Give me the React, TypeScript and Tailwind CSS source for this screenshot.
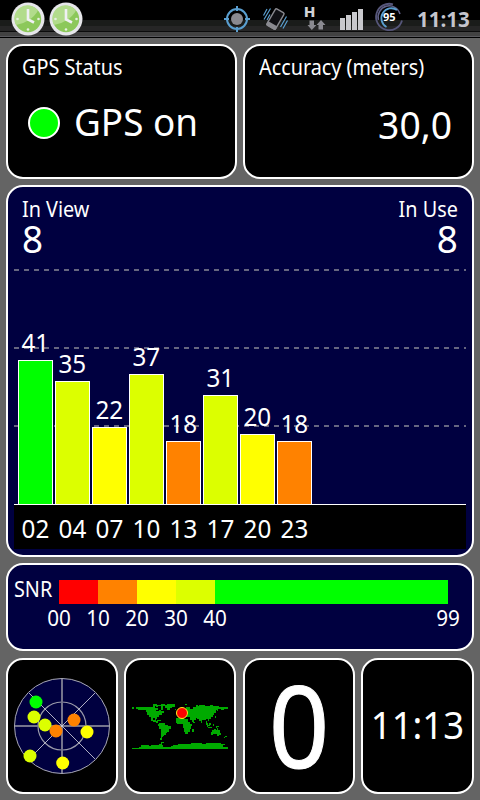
import React from 'react';

const satellites = [
    { id: '02', snr: 41, color: 'bg-[#00ff00]' },
    { id: '04', snr: 35, color: 'bg-[#dcff00]' },
    { id: '07', snr: 22, color: 'bg-[#ffff00]' },
    { id: '10', snr: 37, color: 'bg-[#dcff00]' },
    { id: '13', snr: 18, color: 'bg-[#ff8200]' },
    { id: '17', snr: 31, color: 'bg-[#dcff00]' },
    { id: '20', snr: 20, color: 'bg-[#ffff00]' },
    { id: '23', snr: 18, color: 'bg-[#ff8200]' },
];

const snrScale = [
    { label: '00', color: 'bg-[#ff0000]', width: 'w-[39px]' },
    { label: '10', color: 'bg-[#ff8200]', width: 'w-[39px]' },
    { label: '20', color: 'bg-[#ffff00]', width: 'w-[39px]' },
    { label: '30', color: 'bg-[#dcff00]', width: 'w-[39px]' },
    { label: '40', color: 'bg-[#00ff00]', width: 'w-[233px]' },
    { label: '99', color: '', width: 'w-0' },
];

const skyDots = [
    { x: 36, y: 702, fill: '#00ff00' },
    { x: 34, y: 717, fill: '#dcff00' },
    { x: 45, y: 725, fill: '#dcff00' },
    { x: 56, y: 731, fill: '#ff8200' },
    { x: 74, y: 720, fill: '#ff8200' },
    { x: 87, y: 732, fill: '#ffff00' },
    { x: 30, y: 756, fill: '#dcff00' },
    { x: 62.7, y: 763, fill: '#ffff00' },
];

const Panel: React.FC<{ className?: string; children: React.ReactNode }> = ({ className = '', children }) => (
    <div className={`rounded-[17px] border-2 border-white ${className}`}>{children}</div>
);

// slightly condensed caption used on every panel
const Title: React.FC<{ className?: string; children: React.ReactNode }> = ({ className = 'origin-left', children }) => (
    <div className={`scale-x-[0.9] whitespace-nowrap text-[22px] leading-[24px] ${className}`}>{children}</div>
);

const ClockIcon = () => (
    <svg width="34" height="34" viewBox="0 0 34 34">
        <circle cx="17" cy="17" r="16.5" fill="#e6e6ea" />
        <circle cx="17" cy="17" r="13.2" fill="#8cc85a" />
        <path d="M5 23A13.2 13.2 0 0 1 27 8.500Q24 14 18 18T5 23Z" fill="#b2dc8c" />
        <path d="M17 7V17.500L23 20.500" fill="none" stroke="#f0f0f4" strokeWidth="2.600" />
        <g fill="#e6f0e0">
            <circle cx="6.500" cy="17" r="1.300" />
            <circle cx="27.500" cy="17" r="1.300" />
            <circle cx="17" cy="27.500" r="1.300" />
        </g>
    </svg>
);

// everything on the right of the status bar up to the clock
const StatusIcons = () => (
    <svg width="190" height="38" viewBox="220 0 190 38">
        <g fill="none" stroke="#5a9fd0" strokeWidth="2">
            <circle cx="237" cy="19" r="10" />
            <path d="M237 6V11M237 27V32M224 19H229M245 19H250" />
        </g>
        <circle cx="237" cy="19" r="6" fill="#8a8a90" />

        <g transform="rotate(30 275.500 19)">
            <rect x="270.500" y="9.500" width="10" height="19" rx="1.500" fill="#101014" stroke="#8a8a90" strokeWidth="1.400" />
            <rect x="270" y="24.500" width="11" height="4.500" rx="1" fill="#8a8a90" />
        </g>
        <path d="M263.500 15.500L267 9M264 19.500L270.500 8.500M267 20L270 14.500M280.500 27L286.500 16.500M283 28.500L287.500 20.500" fill="none" stroke="#5a9fd0" strokeWidth="1.200" />

        <text x="303.800" y="17" fontFamily="DejaVu Sans" fontWeight="bold" fontSize="14" fill="#d2d2d6">H</text>
        <path d="M309.500 20.500H314V25H316.500L311.800 30L307.500 25H309.500Z" fill="#8a8a90" />
        <path d="M321 20L325.500 25H323V29.500H318.500V25H316.500Z" fill="#8a8a90" />

        <g fill="#c8c8cc">
            <rect x="340" y="18" width="5" height="12" />
            <rect x="346" y="15" width="5" height="15" />
            <rect x="352" y="12" width="5" height="18" />
            <rect x="358" y="9" width="5" height="21" />
        </g>

        <path d="M393 4.300A13.200 13.200 0 1 0 402 20.500" fill="none" stroke="#56567a" strokeWidth="1.800" />
        <path d="M400 14A11 11 0 0 0 378.500 20" fill="none" stroke="#62628a" strokeWidth="1.500" />
        <path d="M397 10A10 10 0 1 0 386.500 27" fill="none" stroke="#5a9fd0" strokeWidth="1.800" />
        <text x="389.300" y="21" textAnchor="middle" fontFamily="Open Sans" fontWeight="bold" fontSize="11" fill="#ffffff">95</text>
    </svg>
);

const SkyView = () => (
    <svg width="108" height="132" viewBox="8 660 108 132">
        <circle cx="62" cy="726" r="47.500" fill="#000040" stroke="#a8a8b4" strokeWidth="1" />
        <circle cx="62" cy="726" r="24" fill="none" stroke="#9a9aaa" strokeWidth="1.200" />
        <path d="M62 679V773M15 726H109" stroke="#74748c" strokeWidth="2" />
        <path d="M29 693L95 759M95 693L29 759" stroke="#dcdce6" strokeWidth="0.800" />
        {skyDots.map(dot => (
            <circle key={`${dot.x}-${dot.y}`} cx={dot.x} cy={dot.y} r="6.500" fill={dot.fill} />
        ))}
    </svg>
);

const WorldMap = () => (
    <svg width="96" height="48" viewBox="36 144 288 144">
        <g fill="#00aa00" shapeRendering="crispEdges">
            <path d="M36 156H42V162H36ZM48 156H99V153H105V159H114V165H108V168H117V165H123V168H132V174H126V180H117V186H111V192H105V189H93V186H87V180H81V171H78V165H54V162H48Z" />
            <path d="M99 147H111V150H123V147H135V153H129V159H123V153H114V156H108V153H99ZM123 159H129V165H123ZM132 150H141V147H165V156H156V159H150V165H141V159H135V153H132Z" />
            <path d="M93 189H99V195H105V192H108V198H114V204H108V201H99V198H93ZM111 195H123V198H111Z" />
            <path d="M117 204H135V210H144V213H153V222H147V231H141V234H138V240H132V243H129V246H126V255H120V249H123V222H117V213H114V207H117Z" />
            <path d="M168 189H192V192H204V201H210V207H216V213H213V222H210V231H204V237H195V231H192V219H189V207H171V204H168Z" />
            <path d="M216 222H222V231H216Z" />
            <path d="M198 156H210V162H219V156H228V153H237V150H255V153H270V150H279V153H297V156H324V162H312V165H303V162H294V168H291V165H288V174H282V180H279V186H273V192H267V198H264V192H258V195H246V204H243V198H237V192H231V189H228V195H222V201H216V195H210V186H198V180H204V174H198Z" />
            <path d="M195 147H201V150H195ZM228 150H234V153H228ZM165 162H168V165H165ZM219 201H225V204H219ZM285 183H288V189H285ZM258 198H261V204H264V210H270V213H264V216H261V210H258ZM267 204H273V210H267ZM279 207H282V213H279ZM288 213H297V216H291V219H288ZM264 216H276V219H264Z" />
            <path d="M276 225H282V222H288V225H291V219H294V225H300V234H303V240H297V243H291V237H279V240H273V231H276ZM312 246H315V249H312ZM315 243H321V246H315Z" />
            <path d="M36 279H57V276H63V270H87V273H93V270H117V267H123V261H132V264H126V270H129V276H153V273H159V270H174V267H213V264H246V267H258V264H303V267H315V270H309V276H324V282H36Z" />
        </g>
        <circle cx="186" cy="174" r="16.500" fill="#ff0000" stroke="#ffee20" strokeWidth="3" />
    </svg>
);

const SatelliteChart = () => (
    <div className="relative mx-[6px] h-[296px]">
        {/* grid lines */}
        <div className="absolute inset-x-0 top-[16px] flex flex-col gap-[76px]">
            {[0, 1, 2].map(i => (
                <div key={i} className="h-[2px] bg-[repeating-linear-gradient(90deg,#666680_0_5px,transparent_5px_10px)]" />
            ))}
        </div>
        <div className="relative flex h-[252px] items-end gap-[2px] border-b border-white pl-[4px]">
            {satellites.map(sat => (
                <div key={sat.id} className="flex w-[35px] flex-col items-center">
                    <span className="mb-[3px] h-[30px] scale-x-[0.97] text-[25px] leading-[30px]">{sat.snr}</span>
                    <div
                        className={`w-full border border-b-0 border-white ${sat.color}`}
                        style={{ height: Math.floor(sat.snr * 3.52) }}
                    />
                </div>
            ))}
        </div>
        <div className="flex h-[44px] gap-[2px] bg-black pl-[4px] pt-[8px]">
            {satellites.map(sat => (
                <span key={sat.id} className="w-[35px] scale-x-[0.97] text-center text-[25px] leading-[30px]">{sat.id}</span>
            ))}
        </div>
    </div>
);

const App: React.FC = () => {
    return (
        <div className="flex h-[800px] w-[480px] flex-col overflow-hidden bg-[#646464] font-['Noto_Sans','Open_Sans',sans-serif] text-white">
            {/* Status bar */}
            <div className="flex h-[38px] shrink-0 items-start bg-[linear-gradient(180deg,#000_0_20px,#1a1c1a_20px_26px,#262626_26px_31px,#0c0c0c_31px_32px,#424242_32px_36px,#58585c_36px_37px,#000_37px)] pl-[10.500px] pt-0">
                <div className="flex gap-[4px] pt-[1.500px]">
                    <ClockIcon />
                    <ClockIcon />
                </div>
                <div className="ml-auto flex">
                    <StatusIcons />
                    <span className="w-[70px] pl-[7px] pt-[7px] font-['Open_Sans'] text-[20.500px] font-bold leading-[24px] text-[#c4c4cc]">11:13</span>
                </div>
            </div>

            <div className="flex flex-col px-[6px] pt-[6px]">
                <div className="flex gap-[6px]">
                    <Panel className="h-[135px] w-[231px] bg-black pl-[14px] pt-[8px]">
                        <Title>GPS Status</Title>
                        <div className="mt-[23px] flex items-start pl-[6px]">
                            <div className="mt-[6px] size-[32px] rounded-full border-2 border-white bg-[#00ff00]" />
                            <span className="ml-[14px] origin-left scale-x-[0.97] text-[38px] leading-[40px]">GPS on</span>
                        </div>
                    </Panel>
                    <Panel className="h-[135px] w-[231px] bg-black pl-[14px] pr-[20px] pt-[8px]">
                        <Title>Accuracy (meters)</Title>
                        <div className="mt-[26px] origin-right scale-x-[0.98] text-right text-[38px] leading-[40px]">30,0</div>
                    </Panel>
                </div>

                <Panel className="mt-[6px] h-[372px] bg-[#000040]">
                    <div className="flex h-[66px] justify-between pl-[14px] pr-[14px] pt-[9px]">
                        <div>
                            <Title>In View</Title>
                            <div className="mt-[1px] origin-left scale-x-[0.97] text-[38px] leading-[34px]">8</div>
                        </div>
                        <div className="text-right">
                            <Title className="origin-right">In Use</Title>
                            <div className="mt-[1px] origin-right scale-x-[0.97] text-[38px] leading-[34px]">8</div>
                        </div>
                    </div>
                    <SatelliteChart />
                </Panel>

                <Panel className="mt-[6px] h-[88px] bg-[#000040] pl-[6px] pt-[11px]">
                    <div className="flex">
                        <div className="w-[45px]">
                            <Title>SNR</Title>
                        </div>
                        <div className="mt-[4px] flex h-[24px]">
                            {snrScale.map(step => (
                                <div key={step.label} className={`${step.width} ${step.color}`} />
                            ))}
                        </div>
                    </div>
                    <div className="mt-[1px] flex pl-[45px] text-[22px] leading-[24px]">
                        {snrScale.map(step => (
                            <div key={step.label} className={`${step.width}`}>
                                <span className="-ml-[20px] block w-[40px] scale-x-[0.94] text-center">{step.label}</span>
                            </div>
                        ))}
                    </div>
                </Panel>

                <div className="mt-[7px] flex h-[136px]">
                    <Panel className="w-[112px] bg-black">
                        <SkyView />
                    </Panel>
                    <Panel className="ml-[6px] w-[112px] bg-black pl-[6px] pt-[43px]">
                        <WorldMap />
                    </Panel>
                    <Panel className="ml-[7px] w-[112px] bg-black text-center">
                        <span className="block scale-x-[0.93] text-[114px] leading-[128px] [-webkit-text-stroke:1px_white]">0</span>
                    </Panel>
                    <Panel className="ml-[6px] w-[113px] bg-black pt-[44px] text-center">
                        <span className="block scale-x-[0.96] text-[38px] leading-[40px]">11:13</span>
                    </Panel>
                </div>
            </div>
        </div>
    );
};

export default App;
